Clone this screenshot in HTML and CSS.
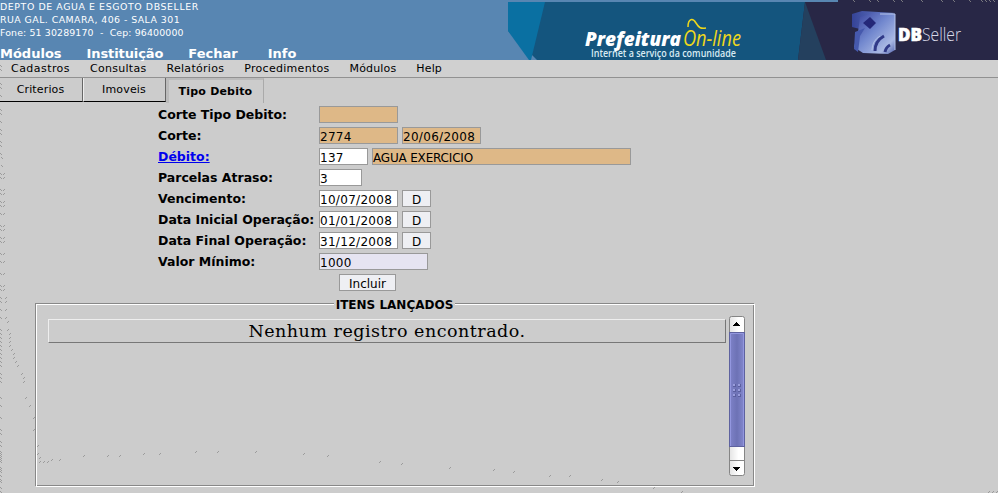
FILE: index.html
```html
<!DOCTYPE html>
<html lang="pt-BR">
<head>
<meta charset="utf-8">
<title>DBSeller</title>
<link rel="stylesheet" href="styles.css">
</head>
<body>
<header class="banner">
  <div class="company">
    <div class="address"><div class="a1">DEPTO DE AGUA E ESGOTO DBSELLER</div><div class="a2">RUA GAL. CAMARA, 406 - SALA 301</div><div class="a3">Fone: 51 30289170&nbsp; -&nbsp; Cep: 96400000</div></div>
    <nav class="main-menu"><a>Módulos</a><a>Instituição</a><a>Fechar</a><a>Info</a></nav>
  </div>
  <svg class="brand" width="490" height="60" viewBox="508 0 490 60">
    <defs>
      <linearGradient id="cube" x1="0" y1="0" x2="1" y2="1"><stop offset="0" stop-color="#343d98"/><stop offset=".45" stop-color="#7187ce"/><stop offset=".8" stop-color="#a9b8e3"/><stop offset="1" stop-color="#5364ae"/></linearGradient>
      <linearGradient id="side" x1="0" y1="0" x2="1" y2="0"><stop offset="0" stop-color="#354397"/><stop offset="1" stop-color="#6f86ce"/></linearGradient>
    </defs>
    <path fill="#14557e" d="M508 2h297v58H537L508 31z"/>
    <path fill="#5886b2" d="M508 31l21 29h-21z"/>
    <path fill="#0a70a2" d="M508 2h37l-14 58h-2L508 31z"/>
    <path fill="#282746" d="M805 2h33V0h160v60H798z"/>
    <path fill="#24405e" d="M805 2l21 58h-28z"/>
    <g class="cube">
      <path fill="url(#side)" d="M852 14l10-3 33 2-9 3v12l-26 1-8-2z"/>
      <path fill="url(#cube)" d="M860 17l13-4 22 1v36l-7 4-25-1-9-6 4-15z"/>
      <path fill="#242878" d="M863 23l7-6 6 6-6 6z"/>
      <path fill="#4659ad" d="M855 32l10-4-5 8-2 16-4-3z"/>
      <path fill="none" stroke="#303987" stroke-width="3" d="M875 51q0-10 9-15M885 52q1-5 5-7"/>
      <path fill="none" stroke="#b3c2e8" d="M880 14h15v36M872 50q0-9 8-14"/>
    </g>
    <text class="logo-main" x="585" y="46" textLength="96" lengthAdjust="spacingAndGlyphs">Prefeitura</text>
    <text class="logo-on" x="683" y="46" textLength="58" lengthAdjust="spacingAndGlyphs">On-line</text>
    <path fill="none" stroke="#efd81b" stroke-width="1.500" d="M688 27c0-9 5-9 8-4s5 6 10 5"/>
    <text class="logo-sub" x="591" y="57" textLength="145" lengthAdjust="spacingAndGlyphs">Internet a serviço da comunidade</text>
    <text class="logo-db" x="898" y="41" textLength="24" lengthAdjust="spacingAndGlyphs">DB</text>
    <text class="logo-seller" x="922" y="41" textLength="39" lengthAdjust="spacingAndGlyphs">Seller</text>
  </svg>
</header>
<nav class="sub-menu"><a>Cadastros</a><a>Consultas</a><a>Relatórios</a><a>Procedimentos</a><a>Módulos</a><a>Help</a></nav>
<div class="tabs"><div class="tab">Criterios</div><div class="tab">Imoveis</div><div class="tab active">Tipo Debito</div></div>
<main>
  <form class="form">
    <label>Corte Tipo Debito:</label><div class="fields"><span class="box w79 tan"></span></div>
    <label>Corte:</label><div class="fields"><span class="box w79 tan">2774</span><span class="box w79 tan">20/06/2008</span></div>
    <label><a class="link">Débito:</a></label><div class="fields"><span class="box w49">137</span><span class="box w259 tan"><span class="name">AGUA EXERCICIO</span></span></div>
    <label>Parcelas Atraso:</label><div class="fields"><span class="box w43">3</span></div>
    <label>Vencimento:</label><div class="fields"><span class="box w79">10/07/2008</span><span class="box btn">D</span></div>
    <label>Data Inicial Operação:</label><div class="fields"><span class="box w79">01/01/2008</span><span class="box btn">D</span></div>
    <label>Data Final Operação:</label><div class="fields"><span class="box w79">31/12/2008</span><span class="box btn">D</span></div>
    <label>Valor Mínimo:</label><div class="fields"><span class="box w109 lilac">1000</span></div>
  </form>
  <div class="box btn submit">Incluir</div>
  <section class="items">
    <h2 class="items-title">ITENS LANÇADOS</h2>
    <div class="items-body">
      <div class="empty">Nenhum registro encontrado.</div>
      <svg class="scroll" width="16" height="160" viewBox="0 0 16 160">
        <defs><linearGradient id="track"><stop offset="0" stop-color="#e4e4e4"/><stop offset=".6" stop-color="#fff"/><stop offset="1" stop-color="#fff"/></linearGradient>
        <linearGradient id="thumb"><stop offset="0" stop-color="#7f83ca"/><stop offset=".5" stop-color="#6d72b5"/><stop offset="1" stop-color="#8589d0"/></linearGradient></defs>
        <rect x=".5" y=".5" width="15" height="159" rx="2" fill="url(#track)" stroke="#858585"/>
        <path d="M1 144.500h14" stroke="#858585"/>
        <rect x=".5" y="16.500" width="15" height="114" fill="url(#thumb)" stroke="#5e629f"/>
        <path d="M1.500 130V17.500h13V130" fill="none" stroke="#9397df"/>
        <path d="M4 10h7V9h-1V8H9V7H8V6H7v1H6v1H5v1H4zM4 151h7v1h-1v1H9v1H8v1H7v-1H6v-1H5v-1H4z"/>
        <path fill="#5b5f9f" d="M4 68h3v3H4zM9 68h3v3H9zM4 73h3v3H4zM9 73h3v3H9zM4 78h3v3H4zM9 78h3v3H9z"/>
        <path fill="#adb1f0" d="M4 68h2v2H4zM9 68h2v2H9zM4 73h2v2H4zM9 73h2v2H9zM4 78h2v2H4zM9 78h2v2H9z" opacity=".75"/>
      </svg>
    </div>
  </section>
</main>
<svg class="specks" width="998" height="493">
  <path class="speck" d="M3 175l2-2M3 179l2-2M3 191l2-2M3 195l2-2M3 203l2-2M3 207l2-2M3 215l2-2M3 227l2-2M3 231l2-2M3 239l2-2M3 243l2-2M3 255l2-2M3 263l2-2M3 275l2-2M3 287l2-2M3 291l2-2M5 299l2-2M5 303l2-2M5 311l2-2M5 319l2-2M7 323l2-2M7 331l2-2M9 335l2-2M9 339l2-2M9 343l2-2M9 347l2-2M11 351l2-2M13 355l2-2M13 359l2-2M15 363l2-2M17 367l2-2M21 375l2-2M23 379l2-2M23 383l2-2M25 399l2-2M29 407l2-2M33 419l2-2M33 431l2-2M37 447l2-2M37 455l2-2M39 459l2-2M39 463l2-2M43 463l2-2M47 463l2-2M51 461l2-2M59 461l2-2M83 457l2-2M107 457l2-2M119 457l2-2M143 455l2-2M159 455l2-2M195 453l2-2M217 453l2-2M255 453l2-2M303 455l2-2M327 457l2-2M379 463l2-2M401 465l2-2M449 469l2-2M493 471l2-2M513 473l2-2M549 477l2-2M569 477l2-2M601 481l2-2M617 483l2-2M653 489l2-2M681 493l2-2M988 493l2-2M992 493l2-2M996 493l2-2"/>
  <path class="speck" d="M0 65l2 2M0 69l2 2M0 83l2 2M0 87l2 2M0 95l2 2M0 109l2 2M0 113l2 2M0 121l2 2M0 129l2 2M0 133l2 2M0 141l2 2M0 145l2 2M0 153l2 2M1 157l2 2M1 165l2 2M0 173l2 2M0 177l2 2M0 189l2 2M0 193l2 2M0 201l2 2M0 205l2 2M0 213l2 2M0 225l2 2M0 229l2 2M0 237l2 2M0 241l2 2M0 253l2 2M0 261l2 2M0 273l2 2M0 285l2 2M0 289l2 2M0 297l2 2M0 301l2 2M0 309l2 2M0 317l2 2M0 329l2 2M0 333l2 2M0 337l2 2M0 341l2 2M0 345l2 2M0 349l2 2M0 353l2 2M0 357l2 2M0 361l2 2M0 365l2 2M0 373l2 2M0 377l2 2M0 381l2 2M0 397l2 2M0 405l2 2M0 417l2 2M0 429l2 2M0 433l2 2M0 441l2 2M0 445l2 2M0 451l2 2M0 453l2 2M0 455l2 2M0 457l2 2M0 459l2 2M0 461l2 2M0 467l2 2M0 469l2 2M0 471l2 2M0 475l2 2M0 479l2 2M0 481l2 2M0 487l2 2M0 491l2 2"/>
  <path class="speck" d="M853 0l2 2M869 0l2 2M877 0l2 2M893 0l2 2M901 0l2 2M921 0l2 2M941 0l2 2M953 0l2 2M969 0l2 2M981 0l2 2M985 0l2 2M989 0l2 2M993 0l2 2"/>
</svg>
</body>
</html>
```
FILE: styles.css
```css
* { box-sizing: border-box; }
body { margin: 0; width: 998px; height: 493px; overflow: hidden; background: #ccc; color: #000; font: 11px "DejaVu Sans", sans-serif; }
.banner { height: 60px; display: flex; background: #5886b2; color: #fff; }
.company { width: 508px; height: 60px; white-space: nowrap; }
.address { height: 46px; font-size: 9.4px; line-height: 13px; }
.a1 { letter-spacing: .59px; }
.a2 { letter-spacing: .45px; }
.a3 { letter-spacing: .14px; }
.main-menu { display: flex; font-weight: bold; font-size: 13px; line-height: 15px; gap: 25px; }
.main-menu a:nth-child(2) { letter-spacing: -.1px; }
.main-menu a:nth-child(3) { margin-right: 5px; }
.brand { display: block; }
.logo-main, .logo-on, .logo-sub { font-family: "Open Sans", sans-serif; }
.logo-main { font-size: 20px; font-weight: 800; font-style: italic; fill: #fff; }
.logo-on { font-size: 21px; font-style: italic; fill: #efd81b; }
.logo-sub { font-size: 10px; font-weight: 600; fill: #d8eaf2; }
.logo-db, .logo-seller { font-family: "Open Sans", sans-serif; font-size: 17.5px; }
.logo-db { font-weight: 800; fill: #fff; stroke: #fff; stroke-width: .6; }
.logo-seller { font-weight: 300; fill: #d8d8e8; }
.sub-menu { height: 18px; padding-left: 11px; display: flex; gap: 20px; line-height: 17px; background: #d0d0d0; border-bottom: 1px solid #919191; white-space: nowrap; letter-spacing: .29px; }
.sub-menu a:first-child { letter-spacing: .45px; }
.sub-menu a:nth-last-child(-n+2) { letter-spacing: .15px; }
.tabs { display: flex; height: 25px; }
.tab { width: 83px; height: 24px; line-height: 23px; text-align: center; padding-right: 1px; letter-spacing: .15px; border-right: 1px solid #666; border-bottom: 1px solid #000; }
.tab + .tab { border-left: 1px solid #eee; }
.tab.active { width: 98px; height: 25px; line-height: 24px; font-weight: bold; letter-spacing: .2px; border: solid #bbb; border-width: 2px 1px 0 3px; border-right-color: #aaa; }
.form { display: grid; grid-template-columns: 161px auto; grid-auto-rows: 21px; margin: 1px 0 0 158px; font-size: 12.5px; }
.form label { font-weight: bold; line-height: 22px; white-space: nowrap; }
.link { color: #00e; text-decoration: underline; }
.fields { display: flex; gap: 4px; padding-top: 2px; }
.box { display: block; height: 17px; border: 1px solid #999; background: #fff; line-height: 18px; font-size: 12px; letter-spacing: .3px; white-space: nowrap; }
.w79 { width: 79px; }
.w49 { width: 49px; }
.w43 { width: 43px; }
.w109 { width: 109px; }
.w259 { width: 259px; }
.tan { background: #deb887; }
.lilac { background: #e6e4f1; }
.name { letter-spacing: -.18px; }
.btn { width: 29px; text-align: center; background: #eeeff3; letter-spacing: 0; }
.submit { width: 57px; margin: 2px 0 0 339px; }
.items { position: relative; width: 719px; height: 183px; margin: 12px 0 0 35px; border: 1px solid #888; }
.items::after { content: ""; position: absolute; inset: 0 -2px -2px 0; border: 1px solid #fff; }
.items-title { position: relative; z-index: 1; width: max-content; height: 15px; margin: -7px auto 0; padding: 0 2px; background: #ccc; font-size: 12px; line-height: 17px; font-weight: bold; }
.items-body { display: flex; align-items: flex-start; padding: 4px 0 0 12px; gap: 3px; }
.empty { width: 678px; height: 24px; margin-top: 3px; border: 1px solid; border-color: #eee #777 #777 #eee; text-align: center; font: 17.5px/23px "DejaVu Serif", serif; letter-spacing: .5px; }
.scroll { display: block; }
.specks { position: absolute; left: 0; top: 0; pointer-events: none; }
.speck { fill: none; stroke: #8e8e8e; stroke-width: .8; }
```
